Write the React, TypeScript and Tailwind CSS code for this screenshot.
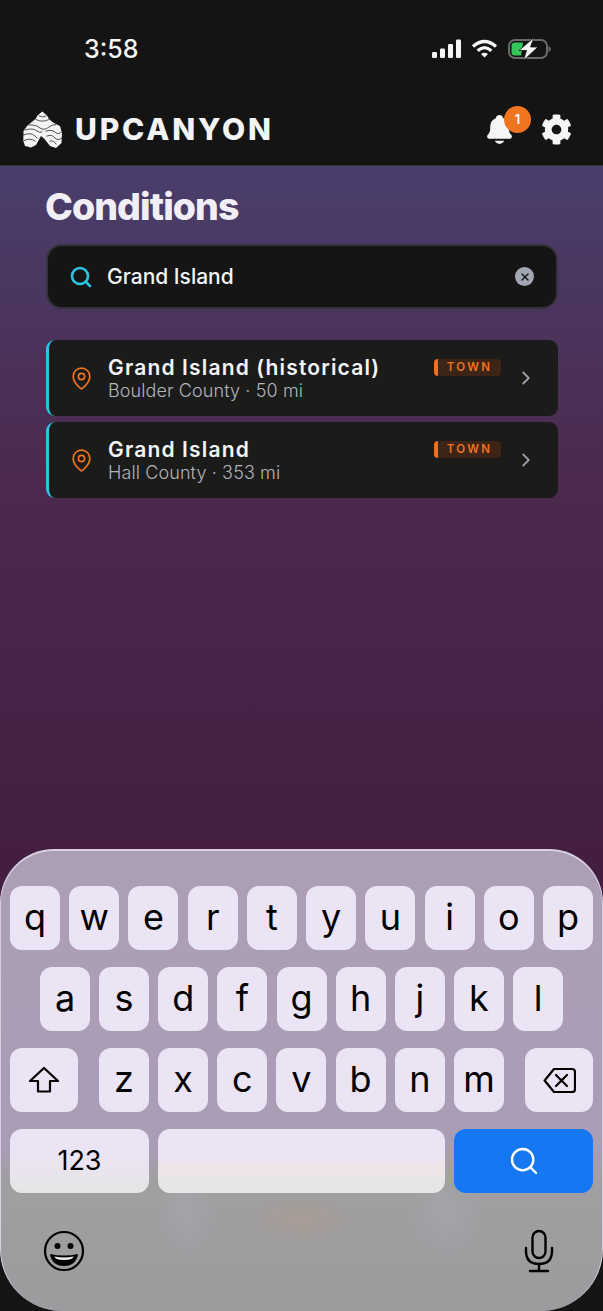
import React from 'react';
import { ChevronRight, MapPin, Search, X } from 'lucide-react';
import { FaCog } from 'react-icons/fa';
import { IoNotifications } from 'react-icons/io5';

const results = [
  { name: 'Grand Island (historical)', meta: 'Boulder County · 50 mi' },
  { name: 'Grand Island', meta: 'Hall County · 353 mi' },
];

const Logo = () => (
  <svg width="41" height="39" viewBox="22 109 41 39" fill="none">
    <path
      d="M42.3 110.5 L47 114.5 L49 118 L53 121.5 L60 125 L62 132 L61.5 142 L56 147 L50 145 L44.5 138 L41 135 L36 144 L31 146.5 L25 145 L23.3 140 L23.5 130 L27 125 L33 120 L35.5 118 L37.5 114.5 Z"
      fill="#f3f4f5"
    />
    <g stroke="#2a2a2a" strokeWidth="0.8" strokeLinecap="round">
      <path d="M39 115 Q42 117 46 115" />
      <path d="M36 118.5 Q42 122 49 118.5" />
      <path d="M29 124 Q36 123.5 40 127 Q44 130 49 126 Q52 123.5 56 123.5" />
      <path d="M25 129 Q33 126.5 37 130 Q39 132 42 131" />
      <path d="M23.5 134 Q31 131 35 135 L37 137" />
      <path d="M24 139.5 Q30 136.5 35 140" />
      <path d="M46 130 Q53 128 56 132 Q59 134 61.5 131" />
      <path d="M47 135 Q52 133 55 137 Q58 140 62 137" />
      <path d="M50 140 Q54 139 56 143" />
    </g>
  </svg>
);

const StatusIcons = () => (
  <div className="flex items-center">
    <svg width="30" height="20" viewBox="0 0 30 20" fill="#f5f5f5">
      <rect x="1" y="13" width="5" height="6" rx="1.2" />
      <rect x="9" y="9.5" width="5" height="9.5" rx="1.2" />
      <rect x="17" y="5" width="5" height="14" rx="1.2" />
      <rect x="25" y="0.5" width="5" height="18.5" rx="1.2" />
    </svg>
    <svg className="ml-[10px]" width="27" height="20" viewBox="0 0 27 20" fill="none" stroke="#f5f5f5" strokeWidth="3.2">
      <path d="M2 7.5 Q13.5 -2.5 25 7.5" />
      <path d="M6.6 11.8 Q13.5 5.5 20.4 11.8" />
      <path d="M13.5 18.5 L10 15 Q13.5 12.5 17 15 Z" fill="#f5f5f5" stroke="none" />
    </svg>
    <svg className="ml-[10px]" width="43" height="24" viewBox="0 0 43 24" fill="none">
      <rect x="1" y="3" width="38" height="18" rx="6" stroke="#6a6a6a" strokeWidth="2" />
      <path d="M3.5 9 Q3.5 5.5 7 5.5 L15 5.5 L13 18.5 L7 18.5 Q3.5 18.5 3.5 15 Z" fill="#34c759" />
      <path d="M40.5 9 Q43 10 43 12 Q43 14 40.5 15 Z" fill="#6a6a6a" />
      <path d="M26 0.5 L11 13.5 L18.5 13.5 L15.5 23.5 L30 10 L22.5 10 Z" fill="#f5f5f5" stroke="#141414" strokeWidth="0.8" />
    </svg>
  </div>
);

const Header = () => (
  <header className="h-[166px] shrink-0 bg-[#141414] border-b border-[#333] flex flex-col">
    <div className="flex h-[98px] items-center justify-between pl-[84px] pr-[52px]">
      <span className="mt-[2px] text-[25px] font-medium text-[#f5f5f5]">3:58</span>
      <StatusIcons />
    </div>
    <div className="flex items-center pl-[22px] pr-[31px] pt-[9px]">
      <Logo />
      <span className="ml-[12px] text-[30px] font-extrabold tracking-[0.095em] text-[#f3f4f5]">UPCANYON</span>
      <div className="ml-auto relative flex items-center">
        <IoNotifications size={33} className="text-[#f5f5f5]" />
        <div className="absolute left-[21px] top-[-7px] flex h-[27px] w-[27px] items-center justify-center rounded-full bg-[#f07520] text-[13px] font-semibold text-white">1</div>
        <FaCog size={31} className="ml-[25px] text-[#f5f5f5]" />
      </div>
    </div>
  </header>
);

const ResultCard = ({ name, meta }: { name: string; meta: string }) => (
  <div className="flex h-[76px] items-center rounded-[9px] border-l-[3px] border-[#2bc4e2] bg-[#1b1b1a]">
    <MapPin size={25} strokeWidth={1.6} className="ml-[20px] text-[#ee7420]" />
    <div className="ml-[14px] w-[326px]">
      <div className="text-[21px] leading-[25px] font-semibold tracking-[0.055em] text-[#f3f4f5]">{name}</div>
      <div className="text-[18px] leading-[22px] font-light tracking-[0.006em] text-[#b3b5ba]">{meta}</div>
    </div>
    <div className="mb-[21px] flex h-[17px] w-[67px] items-center justify-center rounded-[4px] border-l-[4px] border-[#f0701e] bg-[#3c2416] text-[11.5px] font-semibold tracking-[0.2em] text-[#ee7420]">TOWN</div>
    <ChevronRight size={22} strokeWidth={2} className="ml-[14px] text-[#9a9ea8]" />
  </div>
);

const keyClass = 'flex h-[64px] items-center justify-center rounded-[12px] bg-[#ebe4f4] text-black';

const Key = ({ label }: { label: string }) => (
  <div className={`${keyClass} w-[50px] pb-[3px] text-[36px]`}>{label}</div>
);

const ShiftIcon = () => (
  <svg width="32" height="28" viewBox="0 0 32 28" fill="none" stroke="#000" strokeWidth="2.2" strokeLinejoin="round">
    <path d="M16 2 L30 15 L22 15 L22 25.5 L10 25.5 L10 15 L2 15 Z" />
  </svg>
);

const DeleteIcon = () => (
  <svg width="33" height="27" viewBox="0 0 33 27" fill="none" stroke="#000" strokeWidth="2.2" strokeLinecap="round" strokeLinejoin="round">
    <path d="M11 2 L29 2 Q32 2 32 5 L32 22 Q32 25 29 25 L11 25 L2 14 Q1 13.5 2 13 Z" />
    <path d="M13 8 L24 19 M24 8 L13 19" />
  </svg>
);

const SmileIcon = () => (
  <svg width="42" height="42" viewBox="0 0 42 42" fill="none">
    <circle cx="21" cy="21" r="19" stroke="#000" strokeWidth="2.2" />
    <circle cx="14.5" cy="16" r="3" fill="#000" />
    <circle cx="27.5" cy="16" r="3" fill="#000" />
    <path d="M7 24 Q21 27 35 24 Q33 36 21 36 Q9 36 7 24 Z" fill="#000" />
    <path d="M11 26.5 Q21 28.5 31 26.5 Q29 30 21 30 Q13 30 11 26.5 Z" fill="#f3f3f3" />
  </svg>
);

const MicIcon = () => (
  <svg width="30" height="44" viewBox="0 0 30 44" fill="none" stroke="#000" strokeWidth="2.4" strokeLinecap="round">
    <rect x="8.5" y="2" width="13" height="27" rx="6.5" />
    <path d="M2 19 L2 22 Q2 35 15 35 Q28 35 28 22 L28 19" />
    <path d="M15 35 L15 42 M6 42 L24 42" />
  </svg>
);

const Keyboard = () => (
  <div className="shrink-0 bg-[linear-gradient(to_bottom,#431e41_0,#431e41_100px,#151515_100px)]">
    <div className="h-[462px] rounded-t-[54px] rounded-b-[62px] border-t-2 border-x border-[#d8cfe0] border-b-0 bg-[radial-gradient(ellipse_60px_26px_at_50%_80%,#a99c95,transparent),radial-gradient(ellipse_30px_50px_at_31%_78%,#a4a5a8,transparent),radial-gradient(ellipse_40px_50px_at_74%_78%,#a4a5a8,transparent),linear-gradient(to_bottom,#ac9fb5_0,#a99cb5_65%,#a09fa2_71%,#9b9c9e_100%)] pt-[35px]">
      <div className="flex flex-col gap-[17px]">
        <div className="flex justify-between px-[9px]">
          {'qwertyuiop'.split('').map((k) => <Key key={k} label={k} />)}
        </div>
        <div className="flex justify-between px-[39px]">
          {'asdfghjkl'.split('').map((k) => <Key key={k} label={k} />)}
        </div>
        <div className="flex px-[9px]">
          <div className={`${keyClass} w-[68px]`}><ShiftIcon /></div>
          <div className="mx-[21px] flex flex-1 justify-between">
            {'zxcvbnm'.split('').map((k) => <Key key={k} label={k} />)}
          </div>
          <div className={`${keyClass} w-[68px]`}><DeleteIcon /></div>
        </div>
        <div className="flex gap-[9px] px-[9px]">
          <div className="flex h-[64px] w-[139px] items-center justify-center rounded-[12px] bg-[linear-gradient(to_bottom,#ebe4f4_40%,#e5e5e5)] text-[27px]">123</div>
          <div className="h-[64px] flex-1 rounded-[12px] bg-[linear-gradient(to_bottom,#ebe4f4_40%,#efe4e8_60%,#e6e6e6_85%)]" />
          <div className="flex h-[64px] w-[139px] items-center justify-center rounded-[12px] bg-[#1677f2]">
            <Search size={32} strokeWidth={1.8} className="text-white" />
          </div>
        </div>
      </div>
      <div className="flex items-center justify-between pl-[42px] pr-[48px] pt-[36px]">
        <SmileIcon />
        <MicIcon />
      </div>
    </div>
  </div>
);

export default function App() {
  return (
    <div className="flex h-[1311px] w-[603px] flex-col overflow-hidden bg-[#151515] font-['Inter',sans-serif]">
      <Header />
      <main className="flex-1 bg-[linear-gradient(to_bottom,#4a3e6c,#4b2a4e_45%,#431e41)] pl-[46px] pr-[45px] pt-[17px]">
        <h1 className="-ml-[1px] text-[37.5px] leading-[48px] font-extrabold tracking-[-0.025em] text-[#f1eff5]">Conditions</h1>
        <div className="mt-[13px] flex h-[65px] items-center rounded-[16px] border-2 border-[#34323a] bg-[#151515] pl-[21px] pr-[22px]">
          <Search size={24} strokeWidth={2.6} className="text-[#2bc4e2]" />
          <span className="ml-[14px] flex-1 text-[21px] font-medium text-[#f3f4f5]">Grand Island</span>
          <div className="flex h-[19px] w-[19px] items-center justify-center rounded-full bg-[#a3a7b3]">
            <X size={12} strokeWidth={3} className="text-[#151515]" />
          </div>
        </div>
        <div className="mt-[31px] flex flex-col gap-[6px]">
          {results.map((r) => <ResultCard key={r.name} name={r.name} meta={r.meta} />)}
        </div>
      </main>
      <Keyboard />
    </div>
  );
}
